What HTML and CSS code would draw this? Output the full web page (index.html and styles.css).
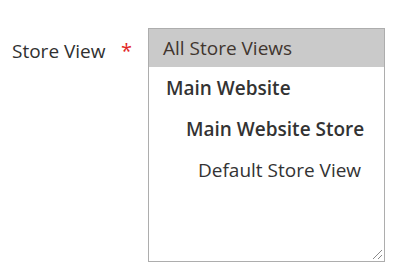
FILE: index.html
```
<!DOCTYPE html>
<html lang="en">
<head>
    <meta charset="UTF-8">
    <meta name="viewport" content="width=device-width, initial-scale=1.0">
    <title>Store View</title>
    <link rel="stylesheet" href="styles.css">
</head>
<body>

<div class="field">
    <label class="field-label">
        <span>Store View</span>
        <span class="required">*</span>
    </label>

    <div class="listbox">
        <div class="option selected">All Store Views</div>
        <div class="option level-1">Main Website</div>
        <div class="option level-2">Main Website Store</div>
        <div class="option level-3">Default Store View</div>

        <!-- resize grip -->
        <svg class="grip" width="12" height="12" viewBox="0 0 12 12">
            <line x1="2" y1="11" x2="11" y2="2" stroke="#8a8a8a" stroke-width="1"/>
            <line x1="7" y1="11" x2="11" y2="7" stroke="#8a8a8a" stroke-width="1"/>
        </svg>
    </div>
</div>

</body>
</html>
```

FILE: styles.css
```
body {
    font-family: "Open Sans", Arial, sans-serif;
    background-color: #fff;
    color: #333;
    margin: 0;
}
.field {
    display: flex;
    padding-top: 28px;
}
.field-label {
    width: 148px;
    box-sizing: border-box;
    display: flex;
    justify-content: space-between;
    padding: 11px 16px 0 12px;
    font-size: 19px;
    line-height: 24px;
    color: #303030;
}
.required {
    color: #e22626;
    font-size: 20px;
}
.listbox {
    position: relative;
    width: 237px;
    height: 234px;
    box-sizing: border-box;
    border: 1px solid #adadad;
    font-size: 19px;
}
.option {
    height: 41px;
    line-height: 41px;
    padding-left: 14px;
    color: #333;
}
.selected {
    height: 38px;
    line-height: 38px;
    background-color: #cacaca;
    color: #41362f;
}
.level-1 {
    height: 42px;
    line-height: 42px;
    padding-left: 17px;
    font-weight: 600;
}
.level-2 {
    padding-left: 37px;
    font-weight: 600;
}
.level-3 {
    padding-left: 49px;
}
.grip {
    position: absolute;
    right: 1px;
    bottom: 1px;
}
```
